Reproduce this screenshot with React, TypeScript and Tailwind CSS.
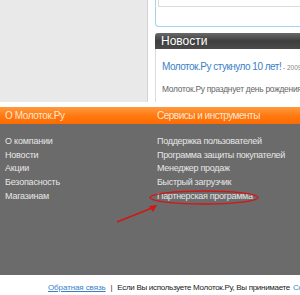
export default function App() {
  const left = ["О компании", "Новости", "Акции", "Безопасность", "Магазинам"];
  const right = [
    "Поддержка пользователей",
    "Программа защиты покупателей",
    "Менеджер продаж",
    "Быстрый загрузчик",
    "Партнерская программа",
  ];
  return (
    <div
      className="relative w-[300px] h-[295px] overflow-hidden bg-white flex flex-col"
      style={{ fontFamily: '"Liberation Sans", Arial, sans-serif' }}
    >
      {/* top area */}
      <div className="flex h-[102px] shrink-0">
        <div className="w-[148px] shrink-0 bg-[#e9e9e9] border-r border-[#d3d3d3]" />
        <div className="flex-1 min-w-0 flex flex-col pl-[7px]">
          <div className="h-[27px] shrink-0 border-l border-b border-[#a6d3f0] rounded-bl-[4px] pl-[2px]">
            <div className="h-[7px] border-l border-b border-[#dcdcdc]" />
          </div>
          <div className="h-[6px] shrink-0" />
          <div className="h-[16px] shrink-0 rounded-tl-[3px] bg-gradient-to-b from-[#6a6a6a] via-[#3e3e3e] to-[#4a4a4a] flex items-center pl-[6px]">
            <span className="text-white text-[12px] leading-none">Новости</span>
          </div>
          <div className="flex-1 border-l border-[#dcdcdc] pl-[6px] pt-[8px] overflow-hidden">
            <div className="whitespace-nowrap leading-none">
              <span className="text-[#3a7fc8] text-[10px] tracking-[-0.5px]">Молоток.Ру стукнуло 10 лет!</span>
              <span className="text-[#888] text-[6.5px]"> - 2009</span>
            </div>
            <div className="whitespace-nowrap text-[#666] text-[8.4px] tracking-[-0.25px] leading-none mt-[12px]">
              Молоток.Ру празднует день рождения. П
            </div>
          </div>
        </div>
      </div>
      <div className="h-[5px] shrink-0" />
      {/* orange bar */}
      <div className="h-[17px] shrink-0 bg-gradient-to-b from-[#ff9a3a] via-[#ff7a10] to-[#ff6a00] flex items-center">
        <div className="w-[152px] shrink-0 pl-[5px] text-[#fde6d2] text-[10px] tracking-[-0.4px] leading-none">О Молоток.Ру</div>
        <div className="pl-[5px] text-[#fde6d2] text-[10px] tracking-[-0.5px] leading-none whitespace-nowrap">Сервисы и инструменты</div>
      </div>
      {/* gray area */}
      <div className="h-[151px] shrink-0 bg-[#6b6b6b] flex pt-[12px]">
        <div className="w-[152px] shrink-0 pl-[5px] flex flex-col gap-[3.7px]">
          {left.map((t) => (
            <div key={t} className="text-[#e6e6e6] text-[9px] tracking-[-0.2px] leading-[10px]">{t}</div>
          ))}
        </div>
        <div className="pl-[5px] flex flex-col gap-[3.7px]">
          {right.map((t) => (
            <div key={t} className="text-[#e6e6e6] text-[9px] tracking-[-0.3px] leading-[10px] whitespace-nowrap">{t}</div>
          ))}
        </div>
      </div>
      {/* footer */}
      <div className="flex-1 flex items-center pt-[6px] pl-[48px] whitespace-nowrap text-[8px] tracking-[-0.3px] leading-none">
        <span className="text-[#3a7fc8] underline tracking-[-0.1px]">Обратная связь</span>
        <span className="text-[#333] mx-[5px]">|</span>
        <span className="text-[#222]">Если Вы используете Молоток.Ру, Вы принимаете</span>
        <span className="text-[#3a7fc8] ml-[3px]">Co</span>
      </div>
      {/* annotation: ellipse + arrow */}
      <svg className="absolute left-0 top-0 pointer-events-none" width="300" height="295">
        <ellipse cx="204" cy="197.5" rx="54" ry="6.5" fill="none" stroke="#d41616" strokeWidth="1.3" />
        <line x1="117" y1="222" x2="152" y2="208" stroke="#d41616" strokeWidth="1.4" />
        <polygon points="157,205 149,206 153,212" fill="#d41616" />
      </svg>
    </div>
  );
}
